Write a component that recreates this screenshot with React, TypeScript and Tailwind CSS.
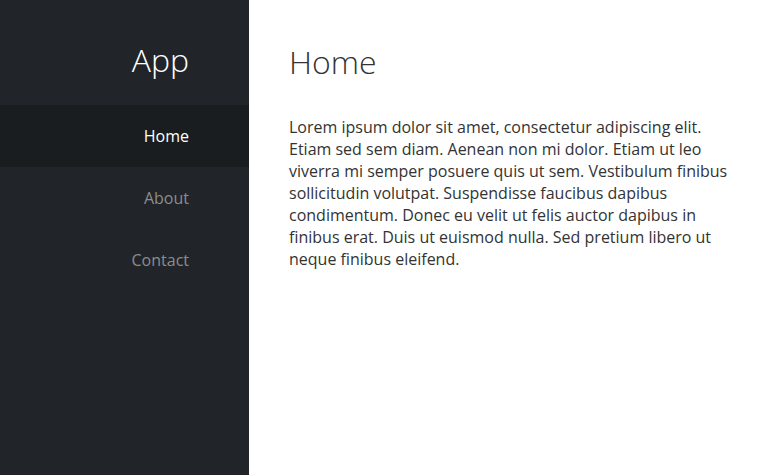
import React from "react";

export default function App() {
  const items = ["Home", "About", "Contact"];
  return (
    <div className="flex h-[475px] w-full" style={{ fontFamily: '"Open Sans", sans-serif' }}>
      <aside className="w-[249px] shrink-0 bg-[#212529] flex flex-col">
        <div className="h-[105px] flex items-center justify-end pr-[60px] pt-[14px]">
          <span className="text-[32px] font-light text-white leading-none">App</span>
        </div>
        <nav className="flex flex-col">
          {items.map((it, i) => (
            <div
              key={it}
              className={
                "h-[62px] flex items-center justify-end pr-[60px] text-[16px] " +
                (i === 0 ? "bg-[#1a1d20] text-white" : "text-[#8c8c8c]")
              }
            >
              {it}
            </div>
          ))}
        </nav>
      </aside>
      <main className="flex-1 bg-white px-[40px] pt-[40px]">
        <h1 className="text-[32px] font-light text-[#333] leading-[44px]">Home</h1>
        <p className="mt-[32px] text-[16px] leading-[22px] text-[#333]">
          Lorem ipsum dolor sit amet, consectetur adipiscing elit. Etiam sed sem diam. Aenean non mi dolor. Etiam ut leo viverra mi semper posuere quis ut sem. Vestibulum finibus sollicitudin volutpat. Suspendisse faucibus dapibus condimentum. Donec eu velit ut felis auctor dapibus in finibus erat. Duis ut euismod nulla. Sed pretium libero ut neque finibus eleifend.
        </p>
      </main>
    </div>
  );
}
